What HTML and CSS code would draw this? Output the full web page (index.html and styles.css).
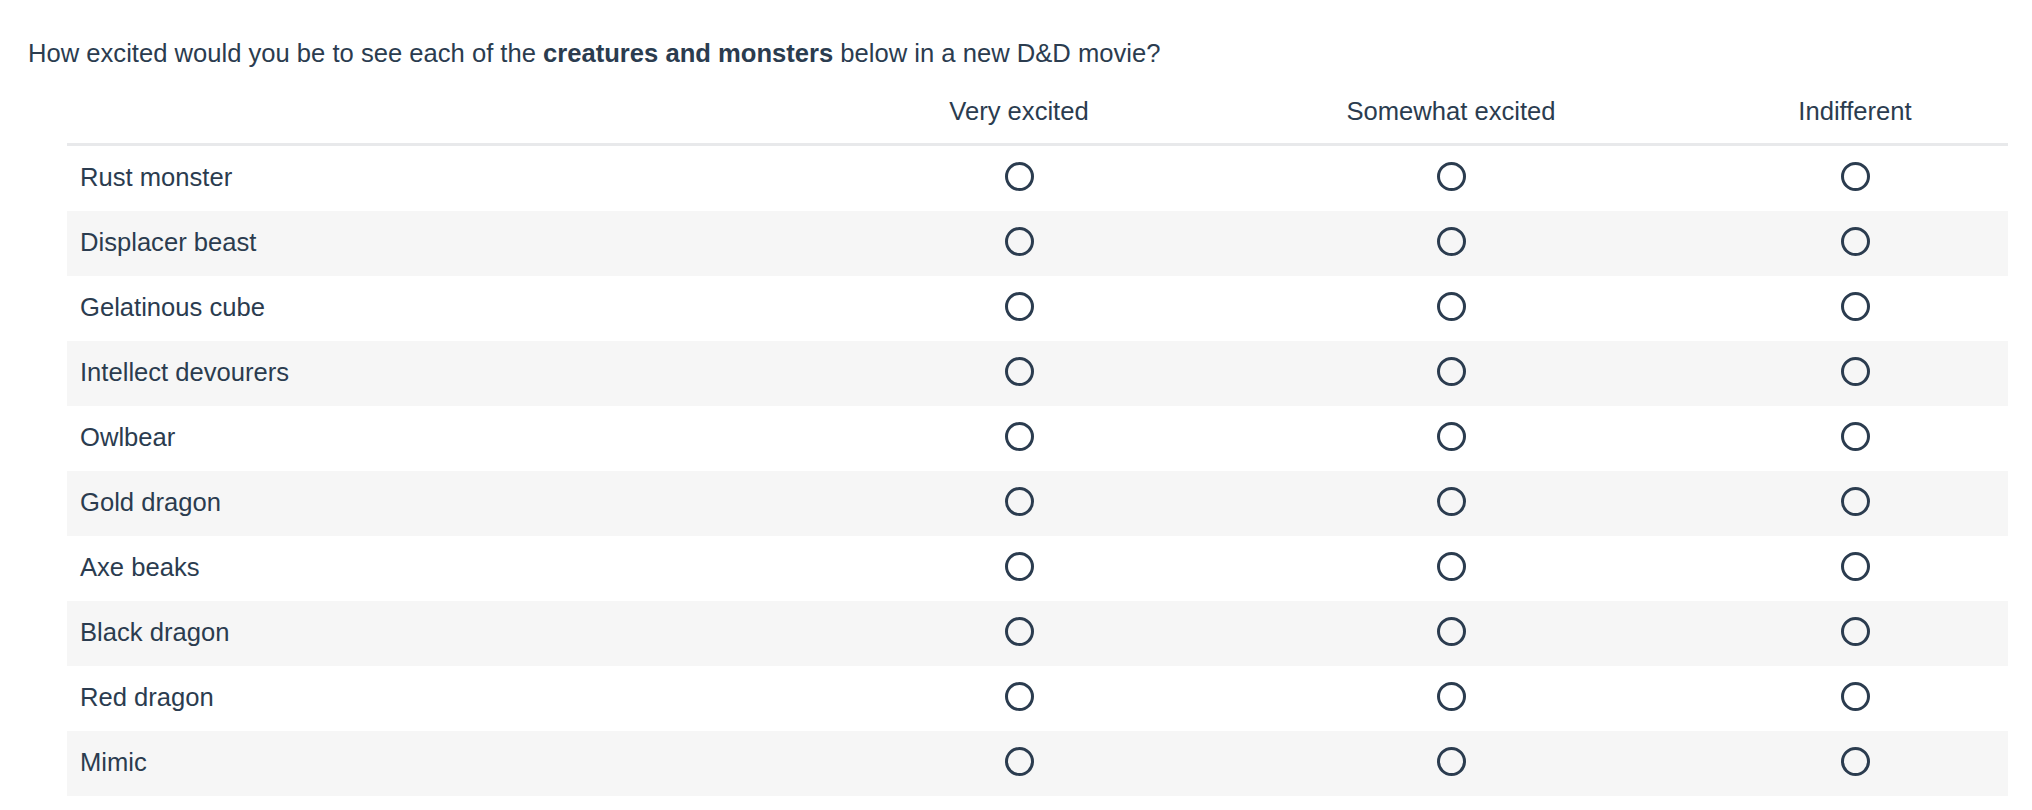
FILE: index.html
```html
<!DOCTYPE html>
<html>
<head>
<meta charset="utf-8">
<link rel="stylesheet" href="styles.css">
</head>
<body>
<div class="survey">
  <p class="question">How excited would you be to see each of the <strong>creatures and monsters</strong> below in a new D&amp;D movie?</p>
  <div class="matrix">
    <div class="row head">
      <div class="label"></div>
      <div class="opt">Very excited</div>
      <div class="opt">Somewhat excited</div>
      <div class="opt">Indifferent</div>
    </div>
    <div class="row"><div class="label">Rust monster</div><div class="opt"><span class="radio"></span></div><div class="opt"><span class="radio"></span></div><div class="opt"><span class="radio"></span></div></div>
    <div class="row"><div class="label">Displacer beast</div><div class="opt"><span class="radio"></span></div><div class="opt"><span class="radio"></span></div><div class="opt"><span class="radio"></span></div></div>
    <div class="row"><div class="label">Gelatinous cube</div><div class="opt"><span class="radio"></span></div><div class="opt"><span class="radio"></span></div><div class="opt"><span class="radio"></span></div></div>
    <div class="row"><div class="label">Intellect devourers</div><div class="opt"><span class="radio"></span></div><div class="opt"><span class="radio"></span></div><div class="opt"><span class="radio"></span></div></div>
    <div class="row"><div class="label">Owlbear</div><div class="opt"><span class="radio"></span></div><div class="opt"><span class="radio"></span></div><div class="opt"><span class="radio"></span></div></div>
    <div class="row"><div class="label">Gold dragon</div><div class="opt"><span class="radio"></span></div><div class="opt"><span class="radio"></span></div><div class="opt"><span class="radio"></span></div></div>
    <div class="row"><div class="label">Axe beaks</div><div class="opt"><span class="radio"></span></div><div class="opt"><span class="radio"></span></div><div class="opt"><span class="radio"></span></div></div>
    <div class="row"><div class="label">Black dragon</div><div class="opt"><span class="radio"></span></div><div class="opt"><span class="radio"></span></div><div class="opt"><span class="radio"></span></div></div>
    <div class="row"><div class="label">Red dragon</div><div class="opt"><span class="radio"></span></div><div class="opt"><span class="radio"></span></div><div class="opt"><span class="radio"></span></div></div>
    <div class="row"><div class="label">Mimic</div><div class="opt"><span class="radio"></span></div><div class="opt"><span class="radio"></span></div><div class="opt"><span class="radio"></span></div></div>
  </div>
</div>
</body>
</html>
```
FILE: styles.css
```css
html, body {
  margin: 0;
  padding: 0;
  background: #ffffff;
}
body {
  font-family: "Liberation Sans", Arial, sans-serif;
  color: #2b3c4f;
}
.survey {
  padding: 38px 24px 0 28px;
}
.question {
  margin: 0;
  font-size: 25.6px;
  line-height: 30px;
}
.question strong {
  font-weight: bold;
}
.matrix {
  margin-left: 39px;
  width: 1941px;
}
.row {
  display: grid;
  grid-template-columns: 771px 362px 502px 306px;
  align-items: center;
  height: 65px;
}
.row:nth-child(odd) {
  background: #f6f6f6;
}
.row.head {
  height: auto;
  background: transparent;
  padding: 29px 0 18px;
  border-bottom: 3px solid #e8e9eb;
  font-size: 25.6px;
  line-height: 28px;
}
.label {
  padding-left: 13px;
  font-size: 25.6px;
  line-height: 30px;
  margin-top: -3px;
}
.opt {
  display: flex;
  justify-content: center;
  align-items: center;
}
.radio {
  display: block;
  width: 29px;
  height: 29px;
  box-sizing: border-box;
  border: 3px solid #2b3c4f;
  border-radius: 50%;
  margin-top: -5px;
}
```
